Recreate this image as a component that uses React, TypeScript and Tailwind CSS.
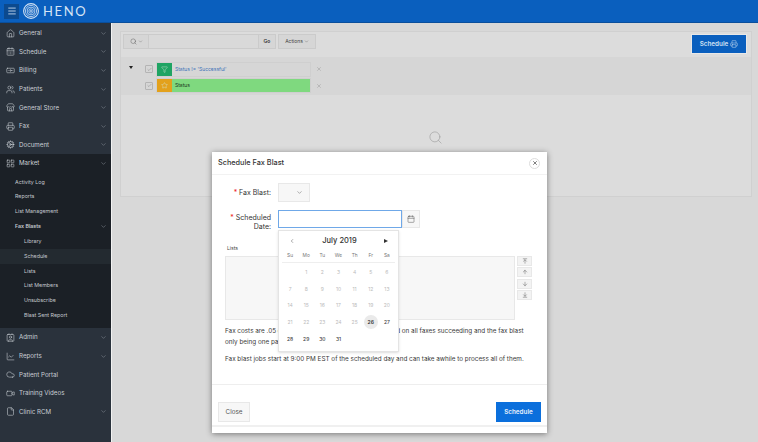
import React from 'react';
import {
  Menu, Home, CalendarDays, Banknote, Users, Printer, Search, ChevronDown, ChevronLeft, X, Check, Filter, Star,
  Calendar, ArrowUp, ArrowDown, ArrowUpToLine, ArrowDownToLine, LineChart, Cloud, Video, File, Store, Cog, LayoutGrid, Contact,
} from 'lucide-react';

type NavItem = { label: string; icon: React.ElementType; arrow?: boolean };

const topNav: NavItem[] = [
  { label: 'General', icon: Home, arrow: true },
  { label: 'Schedule', icon: CalendarDays, arrow: true },
  { label: 'Billing', icon: Banknote, arrow: true },
  { label: 'Patients', icon: Users, arrow: true },
  { label: 'General Store', icon: Store, arrow: true },
  { label: 'Fax', icon: Printer, arrow: true },
  { label: 'Document', icon: Cog, arrow: true },
];

const bottomNav: NavItem[] = [
  { label: 'Admin', icon: Contact, arrow: true },
  { label: 'Reports', icon: LineChart, arrow: true },
  { label: 'Patient Portal', icon: Cloud },
  { label: 'Training Videos', icon: Video },
  { label: 'Clinic RCM', icon: File, arrow: true },
];

const subItems = ['Activity Log', 'Reports', 'List Management', 'Fax Blasts'];
const faxItems = ['Library', 'Schedule', 'Lists', 'List Members', 'Unsubscribe', 'Blast Sent Report'];

const NavRow = ({ item, active }: { item: NavItem; active?: boolean }) => {
  const Icon = item.icon;
  return (
    <div className={`h-[18.6px] flex items-center pl-[6px] pr-[4px] text-[#c9ced4] ${active ? 'bg-[#1b2026]' : ''}`}>
      <Icon size={9} strokeWidth={1.5} className="shrink-0" />
      <span className="ml-[4px] text-[6.2px] leading-none flex-1">{item.label}</span>
      {item.arrow && <ChevronDown size={7} strokeWidth={1.5} className="text-[#9aa1a9]" />}
    </div>
  );
};

const Logo = () => (
  <svg width="16" height="16" viewBox="0 0 16 16" fill="none" stroke="#cfe0f3" strokeWidth="0.8" className="shrink-0">
    <circle cx="8" cy="8" r="7.4" strokeWidth="1.1" />
    <circle cx="8" cy="8" r="5.6" />
    <circle cx="8" cy="8" r="3.9" />
    <circle cx="8" cy="8" r="2.2" />
    <circle cx="8" cy="8" r="0.8" />
  </svg>
);

const FilterRow = ({ color, icon, label, green }: { color: string; icon: React.ReactNode; label: string; green?: boolean }) => (
  <div className="h-[16.5px] flex items-center">
    <div className="w-[8px] h-[8px] ml-[24px] mr-[3px] bg-[#d6d6d6] border border-[#b4b4b4] rounded-[1px] flex items-center justify-center">
      <Check size={5} strokeWidth={2} className="text-[#777]" />
    </div>
    <div className={`w-[155px] h-[15px] flex items-center border border-[#cfcfcf] ${green ? 'bg-[#7fd97f]' : 'bg-[#d6d6d6]'}`}>
      <div className={`w-[15px] h-[13px] flex items-center justify-center text-[#d8e8d8] ${color}`}>{icon}</div>
      <span className={`ml-[3px] text-[5px] leading-none ${green ? 'text-[#1e3a1e]' : 'text-[#3f74b8]'}`}>{label}</span>
    </div>
    <X size={6} strokeWidth={1.5} className="ml-[5px] text-[#888]" />
  </div>
);

const weekDays = ['Su', 'Mo', 'Tu', 'We', 'Th', 'Fr', 'Sa'];
const blanks = [1];
const days = Array.from({ length: 31 }, (_, i) => i + 1);

const DatePopup = () => (
  <div className="absolute left-[66px] top-[55px] w-[121px] h-[122px] bg-white border border-[#e4e4e4] shadow-sm px-[3px] z-10 font-['Inter',sans-serif]">
    <div className="h-[19px] flex items-center justify-between px-[7px]">
      <ChevronLeft size={6} strokeWidth={2.5} className="text-[#777]" />
      <span className="text-[7.5px] leading-none text-[#333] font-medium">July 2019</span>
      <span className="w-0 h-0 border-y-[2.5px] border-y-transparent border-l-[4px] border-l-[#333]" />
    </div>
    <div className="grid grid-cols-7 h-[13px] items-center border-b border-[#eee] pb-[1px] mb-[1px]">
      {weekDays.map((d) => (
        <span key={d} className="text-center text-[4.8px] leading-none text-[#777]">{d}</span>
      ))}
    </div>
    <div className="grid grid-cols-7 auto-rows-[16.7px] items-center">
      {blanks.map((b) => <span key={b} />)}
      {days.map((d) => (
        <span
          key={d}
          className={`justify-self-center flex items-center justify-center w-[14px] h-[14px] rounded-full text-[5px] leading-none ${
            d === 26 ? 'bg-[#eaeaea] text-[#333] font-semibold' : d > 26 ? 'text-[#444] font-medium' : 'text-[#bbb]'
          }`}
        >
          {d}
        </span>
      ))}
    </div>
  </div>
);

const Modal = () => (
  <div className="absolute left-[212px] top-[152px] w-[335px] h-[281px] bg-white shadow-[0_1px_6px_rgba(0,0,0,0.45)] flex flex-col text-[#333]">
    <div className="h-[23px] shrink-0 flex items-center justify-between pl-[6px] pr-[7px] border-b border-[#f2f2f2]">
      <span className="text-[7.3px] leading-none font-medium">Schedule Fax Blast</span>
      <span className="w-[11px] h-[11px] rounded-full border border-[#ddd] flex items-center justify-center">
        <X size={6} strokeWidth={2.5} className="text-[#333]" />
      </span>
    </div>
    <div className="relative flex-1">
      <DatePopup />
      <div className="flex items-center h-[19px] mt-[8px]">
        <div className="w-[59px] text-right text-[7px] leading-none shrink-0"><span className="text-[#e22]">* </span>Fax Blast:</div>
        <div className="ml-[7px] w-[32px] h-[19px] bg-[#f7f7f7] border border-[#e8e8e8] flex items-center justify-end pr-[6px]">
          <ChevronDown size={7} strokeWidth={1.5} className="text-[#555]" />
        </div>
      </div>
      <div className="flex items-start h-[18px] mt-[8px]">
        <div className="w-[59px] mt-[4px] text-right text-[7px] leading-[8.5px] shrink-0">
          <span className="text-[#e22]">* </span>Scheduled<br />Date:
        </div>
        <div className="ml-[7px] w-[124px] h-[18px] border border-[#6fa8e8] bg-white" />
        <div className="w-[18px] h-[18px] bg-[#f7f7f7] border border-[#e8e8e8] flex items-center justify-center">
          <Calendar size={8} strokeWidth={1.5} className="text-[#555]" />
        </div>
      </div>
      <div className="ml-[15px] mt-[18px] text-[5px] leading-none text-[#444]">Lists</div>
      <div className="flex mt-[5px] ml-[13px]">
        <div className="w-[290px] h-[64px] bg-[#f7f7f7] border border-[#e8e8e8]" />
        <div className="ml-[2px] flex flex-col gap-[1.4px]">
          {[ArrowUpToLine, ArrowUp, ArrowDown, ArrowDownToLine].map((Icon, i) => (
            <div key={i} className="w-[15px] h-[10px] bg-[#f3f3f3] border border-[#e8e8e8] flex items-center justify-center">
              <Icon size={6} strokeWidth={2} className="text-[#666]" />
            </div>
          ))}
        </div>
      </div>
      <div className="ml-[13px] mt-[5.5px] w-[302px] text-[6.33px] leading-[11px] text-[#3a3a3a]">
        Fax costs are .05 cents per page, so this estimate is based on all faxes succeeding and the fax blast only being one page.
      </div>
      <div className="ml-[13px] mt-[6.5px] text-[6.33px] leading-[11px] text-[#3a3a3a] whitespace-nowrap">
        Fax blast jobs start at 9:00 PM EST of the scheduled day and can take awhile to process all of them.
      </div>
    </div>
    <div className="h-[43px] shrink-0 border-t border-[#eee] border-b-[2px] border-b-[#f0f0f0] mb-[6px] flex items-end justify-between px-[6px] pb-[3px]">
      <div className="w-[32px] h-[20px] bg-[#f7f7f7] border border-[#e8e8e8] flex items-center justify-center text-[6.3px] leading-none text-[#555]">Close</div>
      <div className="w-[45px] h-[20px] bg-[#0b6fdc] flex items-center justify-center text-[6.3px] leading-none font-semibold text-[#e6f0fb]">Schedule</div>
    </div>
  </div>
);

export default function App() {
  return (
    <div className="relative w-[758px] h-[442px] overflow-hidden bg-[#d8d8d8] font-['Inter',sans-serif]">
      {/* header */}
      <header className="h-[23px] bg-[#0a5fbe] flex items-center pl-[4px] border-b border-[#0a4f9c]">
        <div className="w-[15px] h-[15px] bg-[#0c4a8f] flex items-center justify-center">
          <Menu size={10} strokeWidth={2} className="text-[#d5e4f5]" />
        </div>
        <div className="ml-[4px]"><Logo /></div>
        <span className="ml-[4px] text-[13px] leading-none tracking-[1.6px] text-[#d5e4f5] font-['Lato',sans-serif]">HENO</span>
      </header>

      <div className="flex h-[419px]">
        {/* sidebar */}
        <aside className="w-[111px] shrink-0 bg-[#2a323c] pt-[1px]">
          {topNav.map((n) => <NavRow key={n.label} item={n} />)}
          <NavRow item={{ label: 'Market', icon: LayoutGrid, arrow: true }} active />
          <div className="bg-[#1b2026] pt-[2px] pb-[5px]">
            {subItems.map((s) => (
              <div key={s} className={`h-[14.85px] flex items-center pl-[15px] pr-[4px] text-[5.3px] leading-none text-[#c4c9ce] ${s === 'Fax Blasts' ? 'font-semibold' : ''}`}>
                <span className="flex-1">{s}</span>
                {s === 'Fax Blasts' && <ChevronDown size={7} strokeWidth={1.5} className="text-[#9aa1a9]" />}
              </div>
            ))}
            {faxItems.map((s) => (
              <div key={s} className={`h-[14.85px] flex items-center pl-[24px] text-[5.3px] leading-none text-[#c4c9ce] ${s === 'Schedule' ? 'bg-[#232a30]' : ''}`}>
                {s}
              </div>
            ))}
          </div>
          {bottomNav.map((n) => <NavRow key={n.label} item={n} />)}
        </aside>
        <div className="w-[1px] bg-[#f2f2f2] shrink-0" />

        {/* main */}
        <main className="flex-1 pl-[8px] pr-[6px] pt-[8px]">
          <div className="h-[166px] bg-[#dcdcdc] border border-[#d0d0d0] pt-[2px]">
            <div className="flex items-start justify-between pr-[4px] pl-[2px]">
              <div className="flex h-[15px]">
                <div className="w-[26px] bg-[#d6d6d6] border border-[#cbcbcb] flex items-center justify-center gap-[1px]">
                  <Search size={7} strokeWidth={1.5} className="text-[#555]" />
                  <ChevronDown size={5} strokeWidth={1.5} className="text-[#555]" />
                </div>
                <div className="w-[109px] bg-[#d9d9d9] border-y border-[#cbcbcb]" />
                <div className="w-[18px] bg-[#d6d6d6] border border-[#cbcbcb] flex items-center justify-center text-[5px] font-semibold leading-none text-[#333]">Go</div>
                <div className="ml-[2px] w-[38px] bg-[#d6d6d6] border border-[#cbcbcb] flex items-center justify-center gap-[1px] text-[5px] leading-none text-[#444]">
                  Actions
                  <ChevronDown size={5} strokeWidth={1.5} />
                </div>
              </div>
              <div className="w-[56px] h-[20px] bg-[#0a5fbe] border border-[#e8e8e8] flex items-center justify-center gap-[2px] text-[6.3px] font-semibold leading-none text-[#cfe0f3]">
                Schedule
                <Printer size={8} strokeWidth={1.5} />
              </div>
            </div>
            <div className="relative mt-[3px] h-[38px] bg-[#d6d6d6] pt-[4px]">
              <span className="absolute left-[8px] top-[9px] w-0 h-0 border-x-[2.5px] border-x-transparent border-t-[3.5px] border-t-[#222]" />
              <FilterRow color="bg-[#1fa463]" icon={<Filter size={7} strokeWidth={1.5} />} label="Status != 'Successful'" />
              <FilterRow color="bg-[#e3a11c]" icon={<Star size={7} strokeWidth={1.5} />} label="Status" green />
            </div>
            <div className="flex justify-center mt-[35px] pr-[2px]">
              <Search size={15} strokeWidth={1} className="text-[#9c9c9c]" />
            </div>
          </div>
        </main>
      </div>

      <Modal />
    </div>
  );
}
